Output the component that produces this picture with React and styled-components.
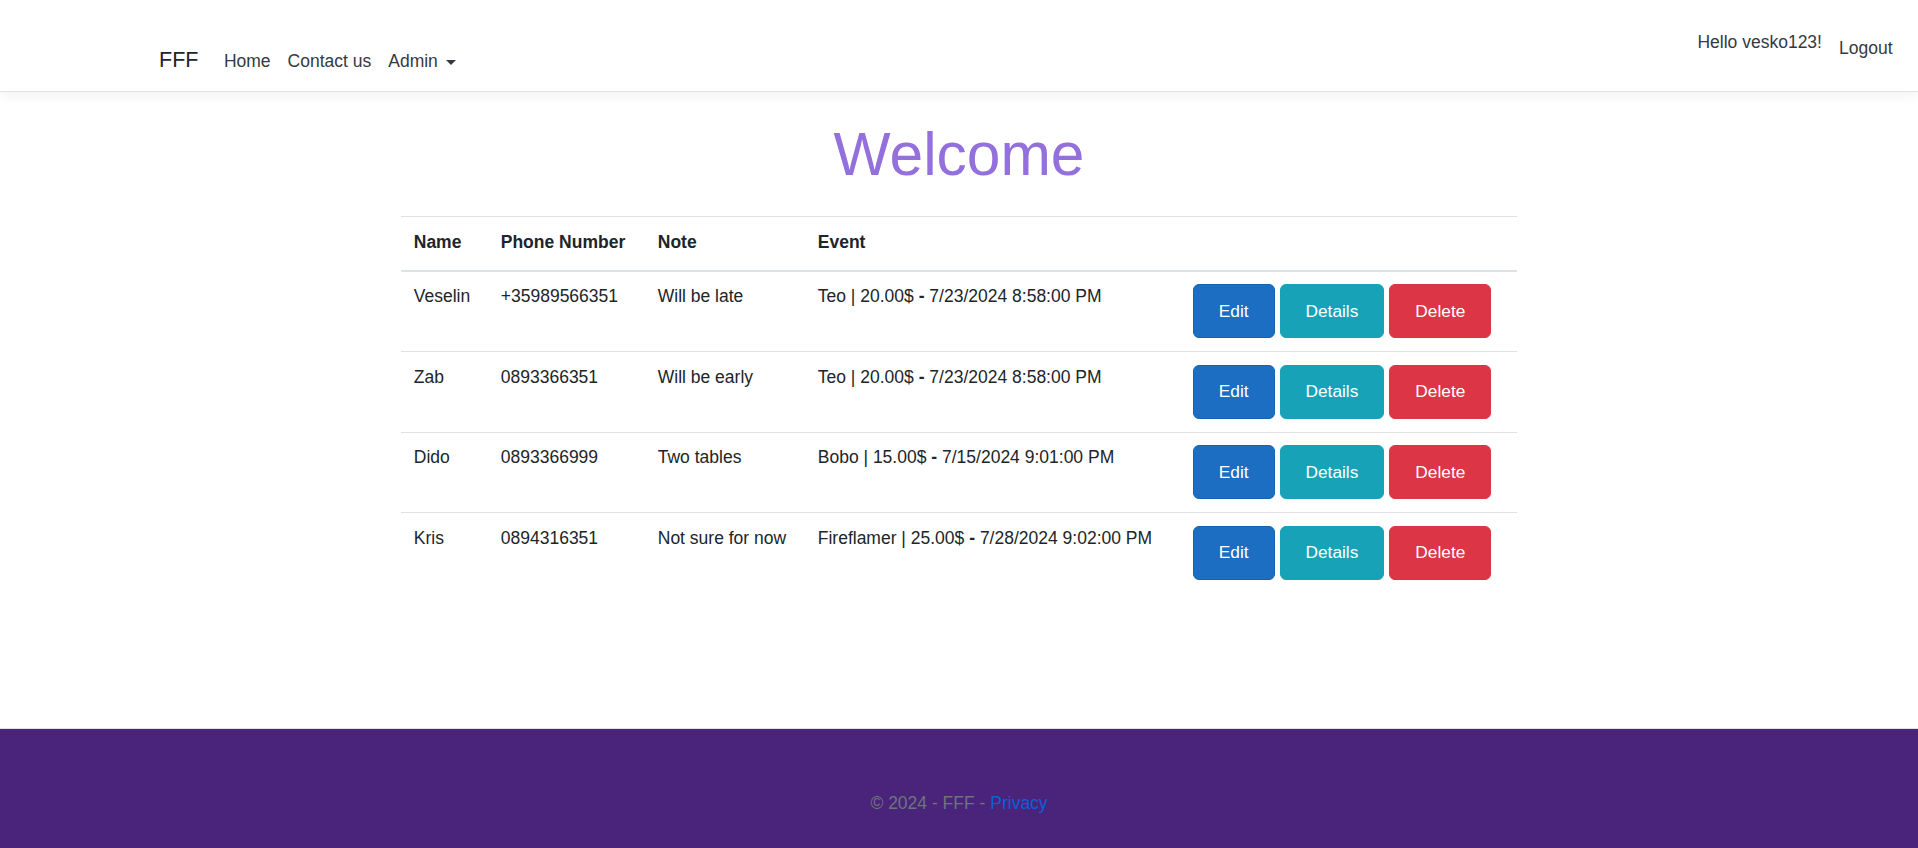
import React from "react";
import styled, { createGlobalStyle } from "styled-components";

const GlobalStyle = createGlobalStyle`
  html, body { margin: 0; padding: 0; }
  body {
    font-family: "Liberation Sans", Arial, sans-serif;
    font-size: 17.5px;
    line-height: 25.5px;
    color: #212529;
    background: #fff;
  }
  * { box-sizing: border-box; }
`;

const Page = styled.div`
  min-height: 100vh;
  display: flex;
  flex-direction: column;
`;

const Navbar = styled.header`
  height: 92px;
  display: flex;
  justify-content: space-between;
  align-items: flex-start;
  padding: 0 17px 0 159px;
  background: #fff;
  border-bottom: 1px solid #dee2e6;
  box-shadow: 0 4px 12px rgba(0, 0, 0, 0.05);
`;

const LeftGroup = styled.nav`
  display: flex;
  align-items: baseline;
  margin-top: 44px;
`;

const Brand = styled.a`
  font-size: 21.5px;
  line-height: 32px;
  color: #212529;
  margin-right: 17px;
  text-decoration: none;
`;

const NavLink = styled.a`
  padding: 0 8.5px;
  line-height: 25.5px;
  color: #343a40;
  text-decoration: none;
  display: inline-flex;
  align-items: center;
`;

const Caret = styled.span`
  display: inline-block;
  margin-left: 8px;
  width: 0;
  height: 0;
  border-top: 5px solid #343a40;
  border-left: 5px solid transparent;
  border-right: 5px solid transparent;
  transform: translateY(1px);
`;

const RightGroup = styled.div`
  display: flex;
  align-items: flex-start;
`;

const RightItem = styled.span`
  padding: 0 8.5px;
  line-height: 25.5px;
  color: #343a40;
  margin-top: ${(p) => p.$top}px;
`;

const Main = styled.main`
  flex: 1;
  width: 1140px;
  margin: 0 auto;
  padding: 26px 12px 17px;
`;

const Title = styled.h1`
  margin: 0 0 26px;
  text-align: center;
  font-size: 60.5px;
  font-weight: 400;
  line-height: 72px;
  color: #9370db;
`;

const Table = styled.table`
  width: 100%;
  border-collapse: collapse;
  table-layout: fixed;
`;

const Col = styled.col`
  width: ${(p) => p.$w}px;
`;

const Th = styled.th`
  text-align: left;
  font-weight: 700;
  padding: 13px 12.75px 14px;
  line-height: 25.5px;
  border-top: 1px solid #dee2e6;
  border-bottom: 2px solid #dee2e6;
  vertical-align: bottom;
`;

const Td = styled.td`
  padding: 12.75px;
  line-height: 25.5px;
  border-top: 1px solid #dee2e6;
  vertical-align: top;
  white-space: nowrap;
`;

const Dash = styled.strong`
  font-weight: 700;
`;

const Actions = styled.div`
  display: flex;
  gap: 5px;
`;

const Button = styled.button`
  font-family: inherit;
  font-size: 17.3px;
  line-height: 25.5px;
  padding: 13.25px 25px;
  border-radius: 6px;
  color: #fff;
  cursor: pointer;
  background: ${(p) => p.$bg};
  border: 1px solid ${(p) => p.$border || p.$bg};
`;

const Footer = styled.footer`
  border-top: 1px solid #dee2e6;
  background: #4a247a;
  color: #6c757d;
  text-align: center;
  line-height: 25.5px;
  padding: 62px 0 32px;
`;

const FooterLink = styled.a`
  color: #0d5fd8;
  text-decoration: none;
`;

const rows = [
  { name: "Veselin", phone: "+35989566351", note: "Will be late", ev: "Teo | 20.00$", date: "7/23/2024 8:58:00 PM" },
  { name: "Zab", phone: "0893366351", note: "Will be early", ev: "Teo | 20.00$", date: "7/23/2024 8:58:00 PM" },
  { name: "Dido", phone: "0893366999", note: "Two tables", ev: "Bobo | 15.00$", date: "7/15/2024 9:01:00 PM" },
  { name: "Kris", phone: "0894316351", note: "Not sure for now", ev: "Fireflamer | 25.00$", date: "7/28/2024 9:02:00 PM" },
];

export default function App() {
  return (
    <Page>
      <GlobalStyle />
      <Navbar>
        <LeftGroup>
          <Brand href="#">FFF</Brand>
          <NavLink href="#">Home</NavLink>
          <NavLink href="#">Contact us</NavLink>
          <NavLink href="#">
            Admin<Caret />
          </NavLink>
        </LeftGroup>
        <RightGroup>
          <RightItem $top={30}>Hello vesko123!</RightItem>
          <RightItem $top={36}>Logout</RightItem>
        </RightGroup>
      </Navbar>
      <Main>
        <Title>Welcome</Title>
        <Table>
          <colgroup>
            <Col $w={87} />
            <Col $w={157} />
            <Col $w={160} />
            <Col $w={375} />
            <Col $w={337} />
          </colgroup>
          <thead>
            <tr>
              <Th>Name</Th>
              <Th>Phone Number</Th>
              <Th>Note</Th>
              <Th>Event</Th>
              <Th></Th>
            </tr>
          </thead>
          <tbody>
            {rows.map((r) => (
              <tr key={r.name}>
                <Td>{r.name}</Td>
                <Td>{r.phone}</Td>
                <Td>{r.note}</Td>
                <Td>
                  {r.ev} <Dash>-</Dash> {r.date}
                </Td>
                <Td>
                  <Actions>
                    <Button $bg="#1b6ec2" $border="#1861ac">Edit</Button>
                    <Button $bg="#17a2b8">Details</Button>
                    <Button $bg="#dc3545">Delete</Button>
                  </Actions>
                </Td>
              </tr>
            ))}
          </tbody>
        </Table>
      </Main>
      <Footer>
        © 2024 - FFF - <FooterLink href="#">Privacy</FooterLink>
      </Footer>
    </Page>
  );
}
